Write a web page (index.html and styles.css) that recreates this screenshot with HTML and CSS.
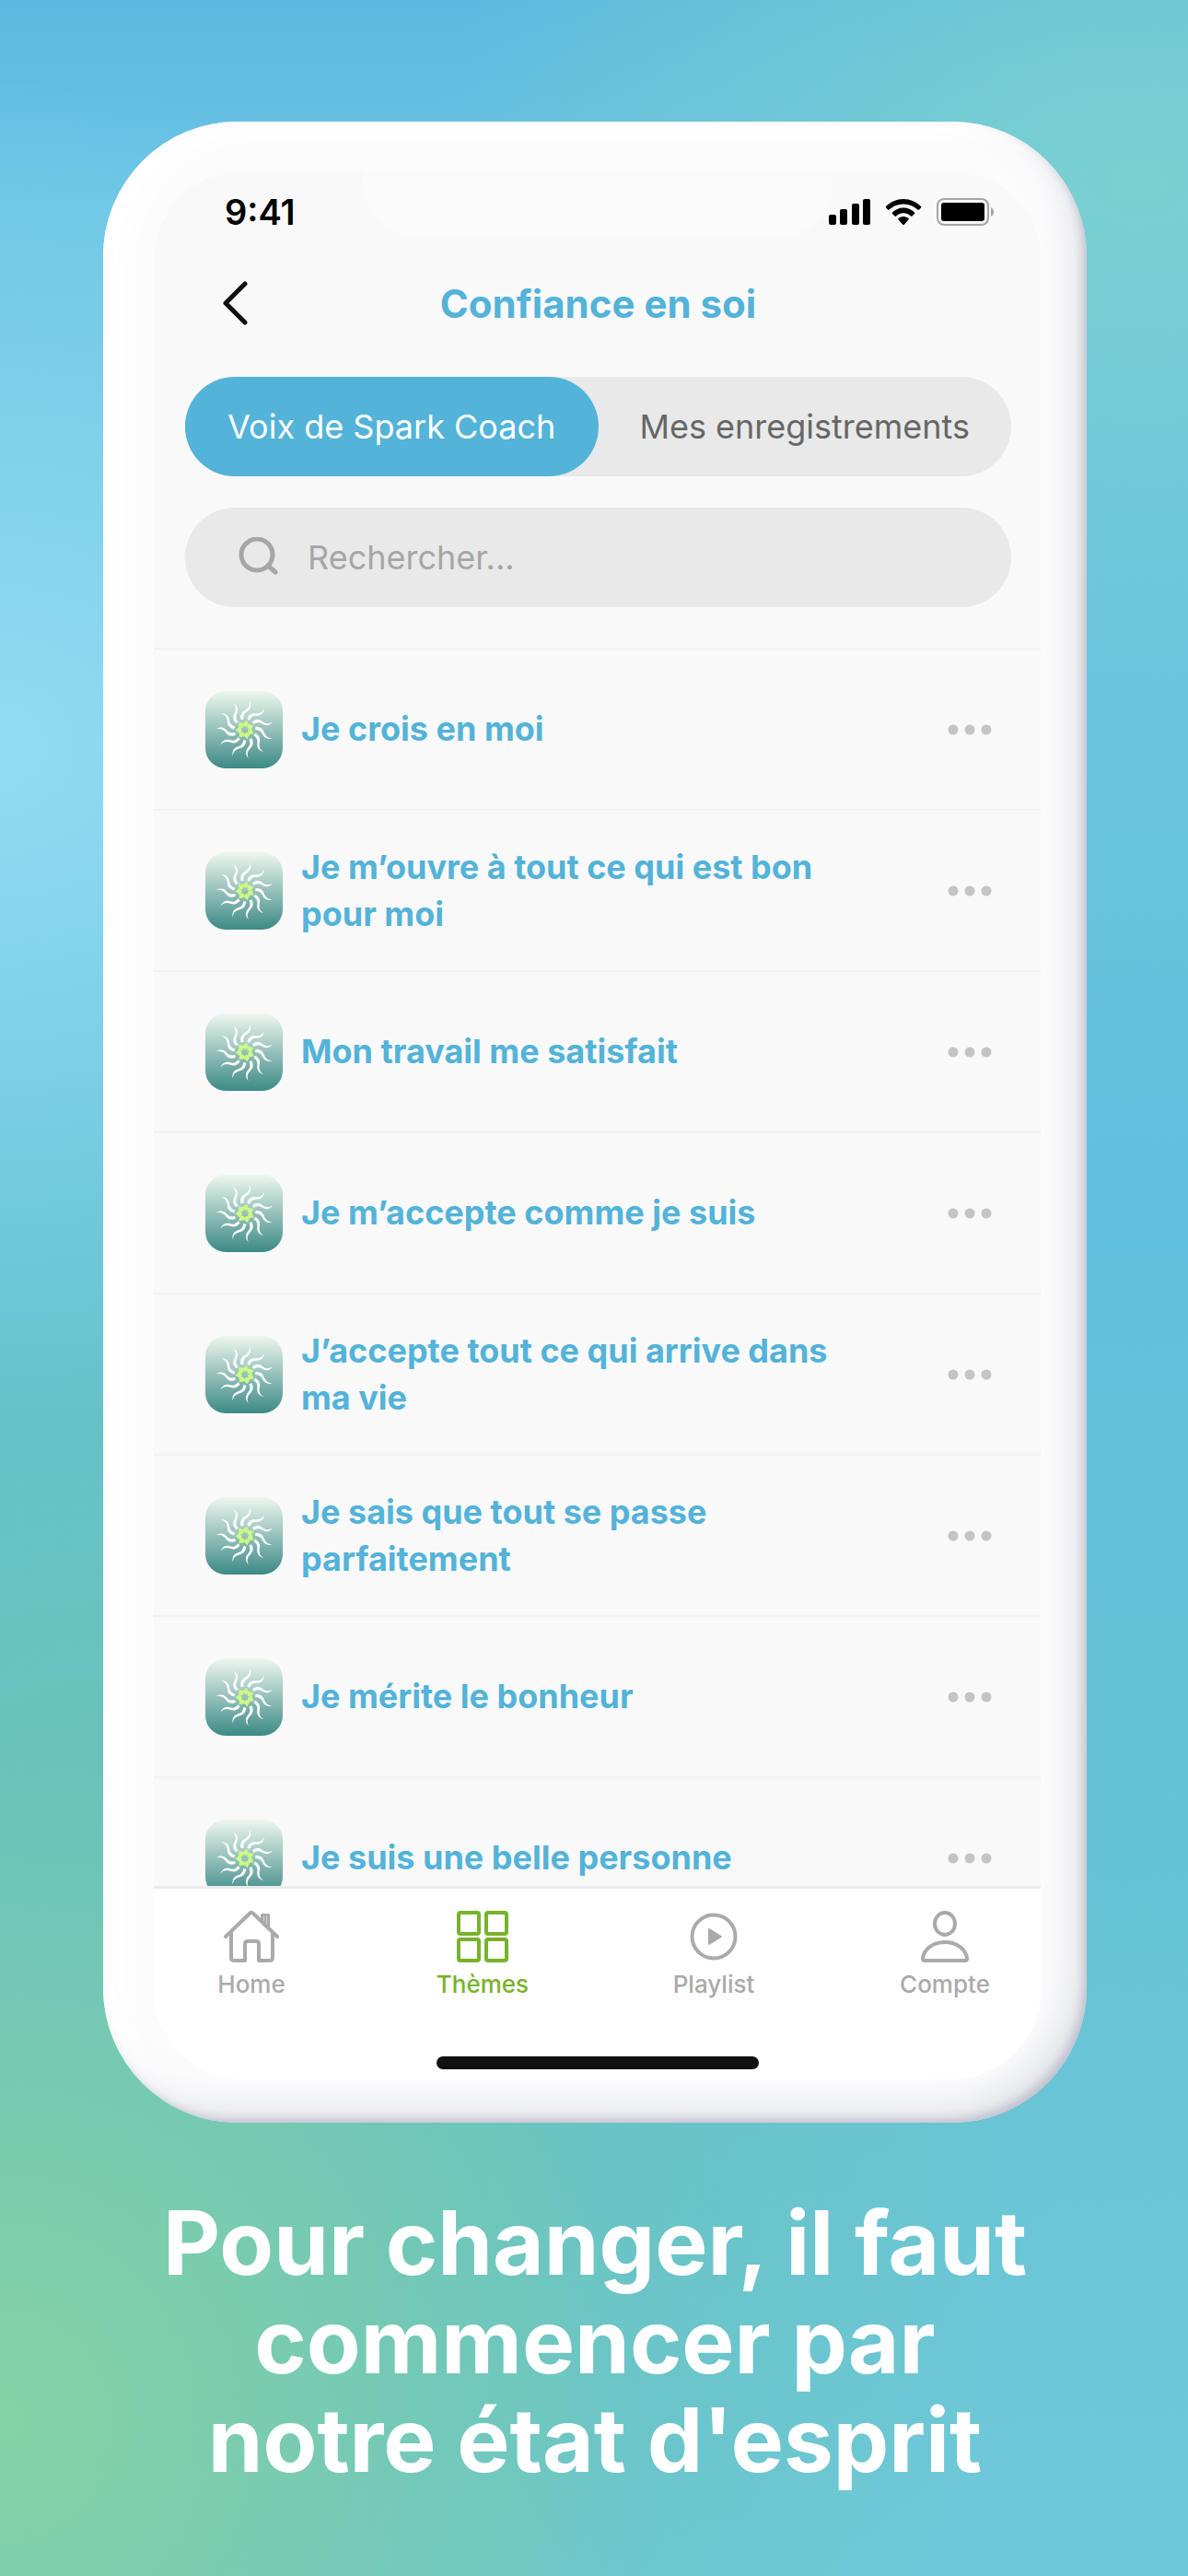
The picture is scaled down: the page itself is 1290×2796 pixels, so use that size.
FILE: index.html
```html
<!DOCTYPE html>
<html lang="fr">
  <head>
    <meta charset="utf-8">
    <meta name="viewport" content="width=device-width, initial-scale=1">
    <title>Confiance en soi</title>
    <link rel="stylesheet" href="styles.css">
  </head>
  <body>
    <!-- shared icons -->
    <svg class="sprite" aria-hidden="true">
      <defs>
        <linearGradient id="tile" x1="0" y1="0" x2="0" y2="1">
          <stop offset="0" stop-color="#eef7ee"/>
          <stop offset="1" stop-color="#3c8a86"/>
        </linearGradient>
        <path id="ray" d="M-4.500 -11C-5.500 -17 -3 -19.500 0 -21C4 -23.500 5.500 -26 5 -31C7.500 -26 6 -22 2 -19.500C-1 -17.500 -2 -15 -1.500 -11Z" fill="#fff"/>
        <path id="petal" d="M-.5 -3L-4.500 -5.500L0 -10.500L3 -5.500Z" fill="#cdf984"/>
      </defs>
      <symbol id="sun" viewBox="0 0 84 84">
        <rect width="84" height="84" rx="22" fill="url(#tile)"/>
        <g transform="translate(43 42)">
          <use href="#ray"/>
          <use href="#ray" transform="rotate(33)"/>
          <use href="#ray" transform="rotate(65)"/>
          <use href="#ray" transform="rotate(98)"/>
          <use href="#ray" transform="rotate(131)"/>
          <use href="#ray" transform="rotate(164)"/>
          <use href="#ray" transform="rotate(196)"/>
          <use href="#ray" transform="rotate(229)"/>
          <use href="#ray" transform="rotate(262)"/>
          <use href="#ray" transform="rotate(295)"/>
          <use href="#ray" transform="rotate(327)"/>
          <use href="#petal" transform="rotate(12)"/>
          <use href="#petal" transform="rotate(63)"/>
          <use href="#petal" transform="rotate(115)"/>
          <use href="#petal" transform="rotate(166)"/>
          <use href="#petal" transform="rotate(218)"/>
          <use href="#petal" transform="rotate(269)"/>
          <use href="#petal" transform="rotate(321)"/>
        </g>
      </symbol>
      <symbol id="dots" viewBox="0 0 48 12">
        <circle cx="6" cy="6" r="5.500"/>
        <circle cx="24" cy="6" r="5.500"/>
        <circle cx="42" cy="6" r="5.500"/>
      </symbol>
    </svg>

    <div class="phone">
      <div class="screen">
        <div class="notch"></div>
        <div class="status">
          <span class="time">9:41</span>
          <div class="status-icons">
            <svg width="45" height="30" viewBox="0 0 45 30">
              <rect x="0" y="18" width="8" height="11" rx="2"/>
              <rect x="12" y="12" width="8" height="17" rx="2"/>
              <rect x="25" y="6" width="8" height="23" rx="2"/>
              <rect x="37" y="1" width="8" height="28" rx="2"/>
            </svg>
            <svg width="40" height="30" viewBox="0 0 40 30">
              <path d="M20 1C27 1 34 4 39 9C39.500 9.500 39.500 10 39 10.500L37 12.500C36.500 13 36 13 35.500 12.500C31 8.500 26 6.500 20 6.500C14 6.500 9 8.500 4.500 12.500C4 13 3.500 13 3 12.500L1 10.500C.5 10 .5 9.500 1 9C6 4 13 1 20 1Z"/>
              <path d="M20 10.500C25 10.500 29 12.500 32 15.500C32.500 16 32.500 16.500 32 17L29.500 19.500C29 20 28.500 20 28 19.500C26 17.500 23.500 16.200 20 16.200C16.500 16.200 14 17.500 12 19.500C11.500 20 11 20 10.500 19.500L8 17C7.500 16.500 7.500 16 8 15.500C11 12.500 15 10.500 20 10.500Z"/>
              <path d="M20 20C22.500 20 24 21 25.500 22C26 22.500 26 23 25.500 23.500L21 28.500C20.500 29.200 19.500 29.200 19 28.500L14.500 23.500C14 23 14 22.500 14.500 22C16 21 17.500 20 20 20Z"/>
            </svg>
            <svg width="63" height="30" viewBox="0 0 63 30">
              <rect x="1" y="1" width="55" height="28" rx="7" fill="none" stroke="#a5a5a5" stroke-width="2"/>
              <rect x="5" y="5" width="47" height="20" rx="3"/>
              <path d="M59 10C63 12 63 18 59 20Z" fill="#a5a5a5"/>
            </svg>
          </div>
        </div>

        <header class="header">
          <button class="back" type="button" aria-label="Retour">
            <svg width="27" height="48" viewBox="0 0 27 48">
              <path d="M24 3L3 24L24 45" fill="none" stroke="#111" stroke-width="5" stroke-linecap="round" stroke-linejoin="round"/>
            </svg>
          </button>
          <h1 class="title">Confiance en soi</h1>
        </header>

        <div class="tabs">
          <button class="tab active" type="button">Voix de Spark Coach</button>
          <button class="tab" type="button">Mes enregistrements</button>
        </div>

        <label class="search">
          <svg width="44" height="44" viewBox="0 0 44 44">
            <circle cx="21" cy="19" r="17" fill="none" stroke="#a6a6a6" stroke-width="5"/>
            <path d="M33 31L41 38" stroke="#a6a6a6" stroke-width="5" stroke-linecap="round"/>
          </svg>
          <input class="search-input" type="text" placeholder="Rechercher..." aria-label="Rechercher">
        </label>

        <ul class="list">
          <li class="row">
            <svg class="cover"><use href="#sun"/></svg>
            <span class="name">Je crois en moi</span>
            <button class="more" type="button" aria-label="Options"><svg width="48" height="12"><use href="#dots"/></svg></button>
          </li>
          <li class="row">
            <svg class="cover"><use href="#sun"/></svg>
            <span class="name">Je m’ouvre à tout ce qui est bon pour moi</span>
            <button class="more" type="button" aria-label="Options"><svg width="48" height="12"><use href="#dots"/></svg></button>
          </li>
          <li class="row">
            <svg class="cover"><use href="#sun"/></svg>
            <span class="name">Mon travail me satisfait</span>
            <button class="more" type="button" aria-label="Options"><svg width="48" height="12"><use href="#dots"/></svg></button>
          </li>
          <li class="row">
            <svg class="cover"><use href="#sun"/></svg>
            <span class="name">Je m’accepte comme je suis</span>
            <button class="more" type="button" aria-label="Options"><svg width="48" height="12"><use href="#dots"/></svg></button>
          </li>
          <li class="row">
            <svg class="cover"><use href="#sun"/></svg>
            <span class="name">J’accepte tout ce qui arrive dans ma vie</span>
            <button class="more" type="button" aria-label="Options"><svg width="48" height="12"><use href="#dots"/></svg></button>
          </li>
          <li class="row">
            <svg class="cover"><use href="#sun"/></svg>
            <span class="name">Je sais que tout se passe parfaitement</span>
            <button class="more" type="button" aria-label="Options"><svg width="48" height="12"><use href="#dots"/></svg></button>
          </li>
          <li class="row">
            <svg class="cover"><use href="#sun"/></svg>
            <span class="name">Je mérite le bonheur</span>
            <button class="more" type="button" aria-label="Options"><svg width="48" height="12"><use href="#dots"/></svg></button>
          </li>
          <li class="row">
            <svg class="cover"><use href="#sun"/></svg>
            <span class="name">Je suis une belle personne</span>
            <button class="more" type="button" aria-label="Options"><svg width="48" height="12"><use href="#dots"/></svg></button>
          </li>
        </ul>

        <nav class="nav">
          <a class="nav-item" href="#home">
            <svg class="nav-icon" viewBox="0 0 60 56">
              <path d="M2 28L28.500 2.500Q30 1.200 31.500 2.500L58 28M8 24V51Q8 54 11 54H23V36Q23 33 26 33H35Q38 33 38 36V54H50Q53 54 53 51V24"/>
              <path d="M41.500 11V4.500H48.500V18M45 7V13" stroke-width="3"/>
            </svg>
            Home
          </a>
          <a class="nav-item current" href="#themes">
            <svg class="nav-icon" viewBox="0 0 60 56">
              <rect x="4" y="2" width="22" height="23" rx="2"/>
              <rect x="34" y="2" width="22" height="23" rx="2"/>
              <rect x="4" y="31" width="22" height="23" rx="2"/>
              <rect x="34" y="31" width="22" height="23" rx="2"/>
            </svg>
            Thèmes
          </a>
          <a class="nav-item" href="#playlist">
            <svg class="nav-icon" viewBox="0 0 60 56">
              <circle cx="30" cy="28" r="23.500"/>
              <path d="M25 20V36L38 28Z" fill="currentColor" stroke-width="2"/>
            </svg>
            Playlist
          </a>
          <a class="nav-item" href="#compte">
            <svg class="nav-icon" viewBox="0 0 60 56">
              <ellipse cx="30" cy="14" rx="11" ry="12"/>
              <path d="M8 54Q6 54 6 52C7 41 18 34 30 34C42 34 53 41 54 52Q54 54 52 54Z"/>
            </svg>
            Compte
          </a>
        </nav>
        <div class="indicator"></div>
      </div>
    </div>

    <p class="slogan">Pour changer, il faut<br>commencer par<br>notre état d'esprit</p>
  </body>
</html>
```

FILE: styles.css
```css
*{
  margin: 0;
  padding: 0;
  box-sizing: border-box;
}
body{
  display: flex;
  flex-direction: column;
  height: 100vh;
  padding: 132px 110px 94px 112px;
  font-family: Inter, "Liberation Sans", sans-serif;
  background:
    radial-gradient(ellipse 60% 26% at 0% 29%, #91dcf4 0%, rgba(145,220,244,0) 100%),
    radial-gradient(ellipse 55% 26% at 0% 94%, #85d2a5 0%, rgba(133,210,165,0) 100%),
    radial-gradient(ellipse 60% 20% at 96% 7%, #7ad0cf 0%, rgba(122,208,207,0) 100%),
    radial-gradient(ellipse 80% 44% at 10% 80%, #69c3bc 0%, #69c3bc 30%, rgba(105,195,188,0) 100%),
    linear-gradient(180deg, #5db9df 0%, #6ac4e4 8%, #6ac4de 30%, #60c0de 46%, #67c3d6 75%, #6fc9da 100%);
}
button{
  border: none;
  background: none;
  font: inherit;
}
svg{
  display: block;
  flex: none;
}
.sprite{
  position: absolute;
  width: 0;
  height: 0;
}

/* phone */
.phone{
  display: flex;
  flex: 1;
  min-height: 0;
  padding: 54px 50px 47px 55px;
  border-radius: 146px;
  background: #fcfcfd;
  box-shadow:
    inset -6px -6px 10px -2px rgba(150,150,170,.45),
    inset -24px -24px 36px -8px rgba(200,203,215,.5),
    inset 24px 10px 30px #fff;
}
.screen{
  position: relative;
  display: flex;
  flex: 1;
  flex-direction: column;
  min-width: 0;
  overflow: hidden;
  border-radius: 96px;
  background: #f9f9f9;
}
.notch{
  position: absolute;
  top: 0;
  left: 50%;
  width: 510px;
  height: 72px;
  margin-left: -255px;
  border-radius: 0 0 60px 60px;
  background: #fbfbfb;
}
.status{
  position: relative;
  display: flex;
  justify-content: space-between;
  align-items: center;
  height: 88px;
  padding: 0 50px 0 77px;
}
.time{
  font-size: 38px;
  font-weight: 600;
}
.status-icons{
  display: flex;
  gap: 16px;
}

.header{
  display: grid;
  grid-template-columns: 84px 1fr 84px;
  align-items: center;
  height: 110px;
  padding: 0 44px 0 46px;
}
.back{
  justify-self: center;
}
.title{
  color: #53b3d9;
  font-size: 42px;
  font-weight: 700;
  text-align: center;
}

.tabs{
  display: flex;
  margin: 25px 32px 0 34px;
  border-radius: 54px;
  background: #e9e9e9;
}
.tab{
  flex: 1;
  height: 108px;
  border-radius: 54px;
  color: #666;
  font-size: 36px;
  font-weight: 400;
  white-space: nowrap;
}
.tab.active{
  background: #53b3d9;
  color: #fff;
}
.search{
  display: flex;
  align-items: center;
  gap: 32px;
  height: 108px;
  margin: 34px 32px 44px 34px;
  padding: 0 57px;
  border-radius: 54px;
  background: #e9e9e9;
}
.search-input{
  flex: 1;
  min-width: 0;
  border: none;
  outline: none;
  background: none;
  color: #666;
  font: 400 36px Inter, "Liberation Sans", sans-serif;
}
.search-input::placeholder{
  color: #a6a6a6;
  opacity: 1;
}

/* list, the last row runs under the nav */
.list{
  flex: 1;
  min-height: 0;
  overflow: hidden;
  list-style: none;
}
.row{
  display: flex;
  align-items: center;
  height: 175px;
  padding: 0 53px 0 56px;
  border-top: 2px solid #f2f2f2;
}
.cover{
  width: 84px;
  height: 84px;
}
.name{
  flex: 1;
  padding: 0 120px 0 20px;
  color: #53b3d9;
  font-size: 36px;
  font-weight: 700;
  line-height: 51px;
}
.more{
  color: #c4c4c4;
}
.more svg{
  fill: currentColor;
}

.nav{
  display: flex;
  justify-content: space-between;
  padding: 24px 44px 62px 46px;
  border-top: 3px solid #ebebeb;
  background: #fff;
}
.nav-item{
  display: flex;
  flex-direction: column;
  align-items: center;
  gap: 8px;
  width: 120px;
  color: #aaa;
  font-size: 26px;
  font-weight: 500;
  line-height: 32px;
  text-decoration: none;
}
.nav-item.current{
  color: #78b22b;
}
.nav-icon{
  width: 60px;
  height: 56px;
  fill: none;
  stroke: currentColor;
  stroke-width: 4;
  stroke-linecap: round;
  stroke-linejoin: round;
}
.indicator{
  padding: 0 0 11px;
  background: #fff;
}
.indicator::before{
  content: "";
  display: block;
  width: 350px;
  height: 14px;
  margin: 0 auto;
  border-radius: 7px;
  background: #111;
}

.slogan{
  margin-top: 77px;
  color: #fff;
  font-size: 96px;
  font-weight: 700;
  line-height: 107px;
  text-align: center;
}
```
